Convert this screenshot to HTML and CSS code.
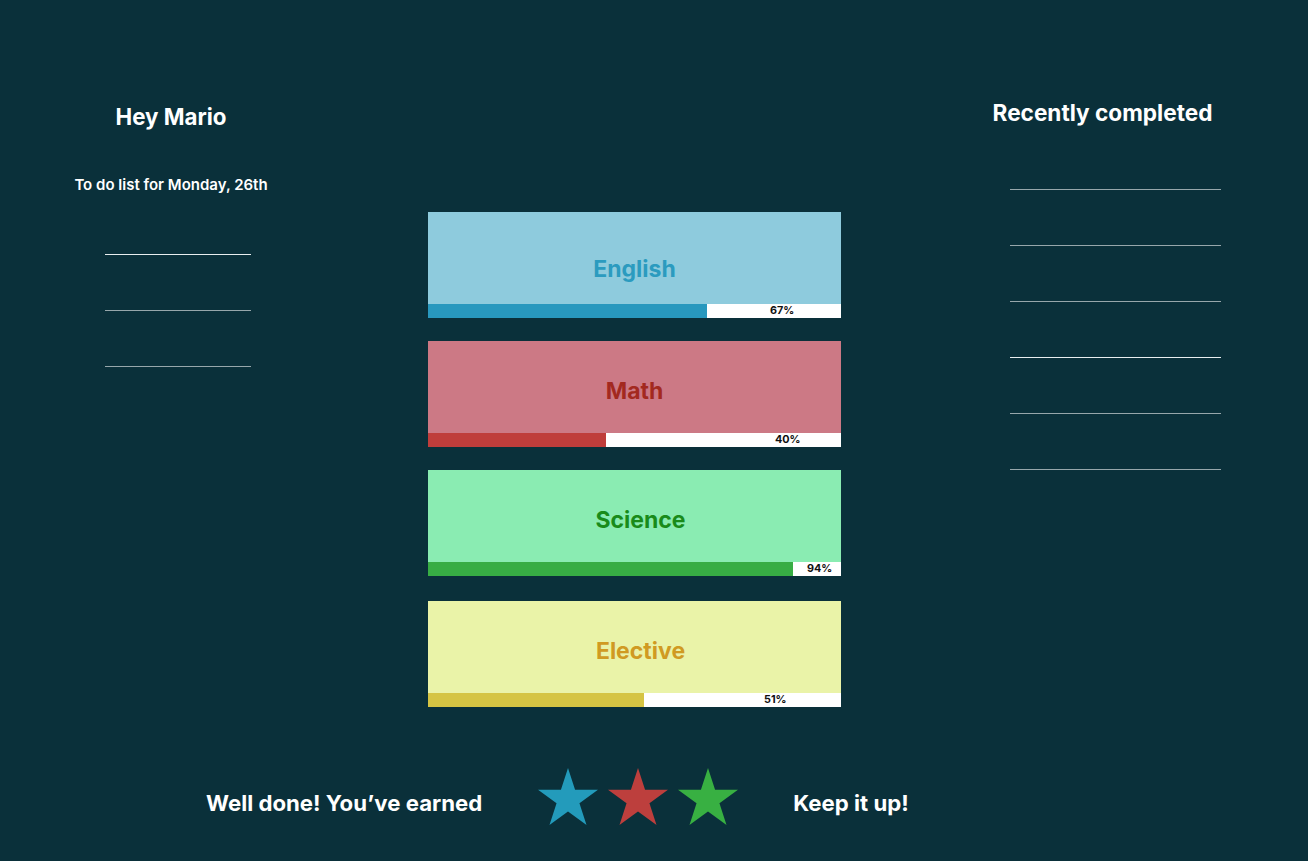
FILE: index.html
```html
<!DOCTYPE html>
<html lang="en">
<head>
<meta charset="utf-8">
<title>Dashboard</title>
<link rel="stylesheet" href="styles.css">
</head>
<body>
<div class="page">
  <div class="main">
    <section class="todo">
      <h1 class="title">Hey Mario</h1>
      <p class="subtitle">To do list for Monday, 26th</p>
      <div class="lines todo-lines">
        <div class="line bright"></div>
        <div class="line"></div>
        <div class="line"></div>
      </div>
    </section>

    <section class="subjects">
      <div class="card english">
        <div class="card-body"><span class="label">English</span></div>
        <div class="bar"><div class="fill" style="width:67.5%"></div><span class="pct">67%</span></div>
      </div>
      <div class="card math">
        <div class="card-body"><span class="label">Math</span></div>
        <div class="bar"><div class="fill" style="width:43.1%"></div><span class="pct">40%</span></div>
      </div>
      <div class="card science">
        <div class="card-body"><span class="label">Science</span></div>
        <div class="bar"><div class="fill" style="width:88.4%"></div><span class="pct">94%</span></div>
      </div>
      <div class="card elective">
        <div class="card-body"><span class="label">Elective</span></div>
        <div class="bar"><div class="fill" style="width:52.3%"></div><span class="pct">51%</span></div>
      </div>
    </section>

    <section class="recent">
      <h2 class="title recent-title">Recently completed</h2>
      <div class="lines recent-lines">
        <div class="line"></div>
        <div class="line"></div>
        <div class="line"></div>
        <div class="line bright"></div>
        <div class="line"></div>
        <div class="line"></div>
      </div>
    </section>
  </div>

  <div class="reward">
    <p class="reward-text">Well done! You’ve earned</p>
    <div class="stars">
      <svg class="star blue" viewBox="0 0 95.1 90.45"><polygon points="47.55,0 58.78,34.55 95.1,34.55 65.72,55.9 76.94,90.45 47.55,69.1 18.16,90.45 29.38,55.9 0,34.55 36.32,34.55"/></svg>
      <svg class="star red" viewBox="0 0 95.1 90.45"><polygon points="47.55,0 58.78,34.55 95.1,34.55 65.72,55.9 76.94,90.45 47.55,69.1 18.16,90.45 29.38,55.9 0,34.55 36.32,34.55"/></svg>
      <svg class="star green" viewBox="0 0 95.1 90.45"><polygon points="47.55,0 58.78,34.55 95.1,34.55 65.72,55.9 76.94,90.45 47.55,69.1 18.16,90.45 29.38,55.9 0,34.55 36.32,34.55"/></svg>
    </div>
    <p class="reward-text keep">Keep it up!</p>
  </div>
</div>
</body>
</html>
```

FILE: styles.css
```css
* { box-sizing: border-box; }

html, body {
  margin: 0;
  padding: 0;
  background: #0a303a;
}

body {
  font-family: Inter, "Noto Sans", "Liberation Sans", sans-serif;
  color: #ffffff;
}

.page {
  width: 1308px;
  height: 861px;
  overflow: hidden;
  display: flex;
  flex-direction: column;
}

.main {
  display: flex;
  align-items: flex-start;
}

.title {
  margin: 0;
  font-size: 22.3px;
  line-height: 26px;
  font-weight: 700;
}

.recent-title {
  font-size: 22.6px;
}

/* left column */
.todo {
  width: 342px;
  padding-top: 104px;
  text-align: center;
}

.subtitle {
  margin: 46px 0 0;
  font-size: 15px;
  line-height: 18px;
  font-weight: 600;
}

.lines {
  display: flex;
  flex-direction: column;
}

.line {
  height: 1px;
  background: #97a7ab;
}

.line.bright {
  background: #e8eeef;
}

.todo-lines {
  margin: 60px 0 0 105px;
  width: 146px;
  gap: 55px;
}

/* center column */
.subjects {
  margin-left: 86px;
  width: 413px;
  padding-top: 212px;
  display: flex;
  flex-direction: column;
  gap: 23px;
}

.card {
  height: 106px;
  display: flex;
  flex-direction: column;
}

.card-body {
  height: 92px;
  display: flex;
  justify-content: center;
  align-items: center;
}

.label {
  font-size: 23px;
  line-height: 26px;
  font-weight: 700;
}

.bar {
  position: relative;
  height: 14px;
  background: #ffffff;
  display: flex;
}

.fill {
  height: 100%;
}

.pct {
  position: absolute;
  top: 0;
  font-size: 10.8px;
  line-height: 14px;
  font-weight: 700;
  color: #111111;
}

.english .card-body { background: #8ecbdd; padding-top: 21px; }
.english .label { color: #2b9bbf; }
.english .fill { background: #2898be; }
.english .pct { left: 342px; }

.math .card-body { background: #cc7985; padding-top: 7px; }
.math .label { color: #a3291f; }
.math .fill { background: #bf3d3b; }
.math .pct { left: 347px; }

.science .card-body { background: #8aecb2; padding-top: 7px; padding-left: 12px; }
.science .label { color: #198b1a; }
.science .fill { background: #37ad44; }
.science .pct { left: 379px; }

.elective { margin-top: 2px; }
.elective .card-body { background: #eaf3a8; padding-top: 7px; padding-left: 12px; }
.elective .label { color: #d09a22; }
.elective .fill { background: #d5c443; }
.elective .pct { left: 336px; }

/* right column */
.recent {
  margin-left: 144px;
  width: 235px;
  padding-top: 100px;
  text-align: center;
}

.recent-lines {
  margin: 63px 0 0 25px;
  width: 211px;
  gap: 55px;
}

/* bottom row */
.reward {
  margin-top: 61px;
  padding-left: 206px;
  display: flex;
  align-items: flex-start;
}

.reward-text {
  margin: 0;
  padding-top: 22px;
  font-size: 22.2px;
  line-height: 26px;
  font-weight: 700;
  white-space: nowrap;
}

.stars {
  margin-left: 56px;
  display: flex;
  gap: 10px;
}

.star {
  width: 60px;
  height: 57px;
  display: block;
}

.star.blue { fill: #239bbb; }
.star.red { fill: #bd3f3d; }
.star.green { fill: #38b042; }

.keep {
  margin-left: 55px;
}
```
